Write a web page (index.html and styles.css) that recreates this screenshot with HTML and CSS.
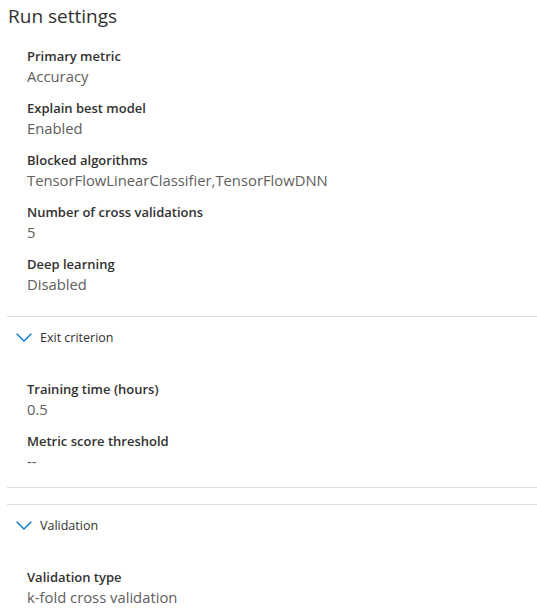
FILE: index.html
```html
<!DOCTYPE html>
<html lang="en">
<head>
<meta charset="utf-8">
<title>Run settings</title>
<link rel="stylesheet" href="styles.css">
</head>
<body>
<div class="panel">
  <h1 class="title">Run settings</h1>
  <div class="section section-main">
    <div class="field">
      <div class="label">Primary metric</div>
      <div class="value">Accuracy</div>
    </div>
    <div class="field">
      <div class="label">Explain best model</div>
      <div class="value">Enabled</div>
    </div>
    <div class="field">
      <div class="label">Blocked algorithms</div>
      <div class="value">TensorFlowLinearClassifier,TensorFlowDNN</div>
    </div>
    <div class="field">
      <div class="label">Number of cross validations</div>
      <div class="value">5</div>
    </div>
    <div class="field">
      <div class="label">Deep learning</div>
      <div class="value">Disabled</div>
    </div>
  </div>
  <div class="section section-collapse section-exit">
    <div class="collapse-header">
      <svg class="chevron" width="16" height="9" viewBox="0 0 16 9"><path d="M0.7 0.7 L8 8 L15.3 0.7" fill="none" stroke="#0078d4" stroke-width="1.3"/></svg>
      <span class="collapse-title">Exit criterion</span>
    </div>
    <div class="collapse-body">
      <div class="field">
        <div class="label">Training time (hours)</div>
        <div class="value">0.5</div>
      </div>
      <div class="field">
        <div class="label">Metric score threshold</div>
        <div class="value">--</div>
      </div>
    </div>
  </div>
  <div class="section section-collapse section-validation">
    <div class="collapse-header">
      <svg class="chevron" width="16" height="9" viewBox="0 0 16 9"><path d="M0.7 0.7 L8 8 L15.3 0.7" fill="none" stroke="#0078d4" stroke-width="1.3"/></svg>
      <span class="collapse-title">Validation</span>
    </div>
    <div class="collapse-body">
      <div class="field">
        <div class="label">Validation type</div>
        <div class="value">k-fold cross validation</div>
      </div>
    </div>
  </div>
</div>
</body>
</html>
```
FILE: styles.css
```css
* { box-sizing: border-box; }
html, body { margin: 0; padding: 0; background: #ffffff; }
body {
  font-family: "Segoe UI", "Open Sans", "Noto Sans", sans-serif;
  color: #323130;
  overflow: hidden;
}
.panel {
  padding-left: 7px;
}
.title {
  margin: 0;
  padding: 2px 0 0 1px;
  font-size: 19px;
  line-height: 28px;
  font-weight: 400;
  color: #323130;
}
.section-main {
  padding: 16px 0 10px 20px;
  border-bottom: 1px solid #e1dfdd;
}
.field {
  margin-bottom: 12px;
}
.label {
  font-size: 13px;
  line-height: 20px;
  font-weight: 600;
  color: #323130;
}
.value {
  font-size: 14.8px;
  line-height: 20px;
  color: #605e5c;
}
.collapse-header {
  display: flex;
  align-items: center;
  height: 40px;
  padding-left: 9px;
}
.chevron { display: block; margin-right: 8px; }
.collapse-title {
  font-size: 12.5px;
  color: #323130;
}
.collapse-body {
  padding: 22px 0 4px 20px;
}
.section-exit {
  border-bottom: 1px solid #e1dfdd;
  margin-bottom: 16px;
}
.section-validation {
  border-top: 1px solid #e1dfdd;
}
```
